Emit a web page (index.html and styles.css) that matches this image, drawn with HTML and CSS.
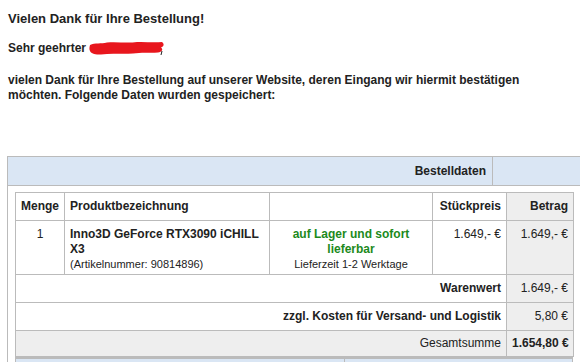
FILE: index.html
```html
<!DOCTYPE html>
<html lang="de">
<head>
<meta charset="utf-8">
<title>Bestellung</title>
<link rel="stylesheet" href="styles.css">
</head>
<body>
<div class="page">
  <p class="title">Vielen Dank für Ihre Bestellung!</p>
  <p class="greet">Sehr geehrter <svg class="redact" width="76" height="15" viewBox="0 0 76 15"><path d="M1 4 C6 1.5 12 3 18 1.5 C28 0.5 38 2.5 48 1 C56 0.5 64 2 73 1 C75.5 3 75 5.5 72 6.5 C74.5 8.5 73 11 69 11.5 C60 12 52 11 44 12.5 C34 13.5 22 12 12 13.5 C6 14 2 12.5 1 10 C0 8 0.5 6 1 4 Z" fill="#e8161d"/><path d="M73 10 L72 14" stroke="#222" stroke-width="1"/></svg></p>
  <p class="intro">vielen Dank für Ihre Bestellung auf unserer Website, deren Eingang wir hiermit bestätigen möchten. Folgende Daten wurden gespeichert:</p>

  <table class="outer">
    <colgroup><col class="oc1"><col class="oc2"></colgroup>
    <tr class="ohead">
      <th class="olabel">Bestelldaten</th>
      <th class="oblank"></th>
    </tr>
    <tr>
      <td class="obody" colspan="2">
        <table class="items">
          <colgroup>
            <col class="c-qty"><col class="c-name"><col class="c-stock"><col class="c-unit"><col class="c-sum">
          </colgroup>
          <tr class="head">
            <th class="qty">Menge</th>
            <th class="name">Produktbezeichnung</th>
            <th></th>
            <th class="num">Stückpreis</th>
            <th class="num grey">Betrag</th>
          </tr>
          <tr class="prod">
            <td class="qty">1</td>
            <td class="name"><strong>Inno3D GeForce RTX3090 iCHILL X3</strong><br><span class="small">(Artikelnummer: 90814896)</span></td>
            <td class="stock"><strong class="green">auf Lager und sofort lieferbar</strong><br><span class="small">Lieferzeit 1-2 Werktage</span></td>
            <td class="num">1.649,- €</td>
            <td class="num grey">1.649,- €</td>
          </tr>
          <tr class="tot">
            <th class="num" colspan="4">Warenwert</th>
            <td class="num grey">1.649,- €</td>
          </tr>
          <tr class="tot">
            <th class="num" colspan="4">zzgl. Kosten für Versand- und Logistik</th>
            <td class="num grey">5,80 €</td>
          </tr>
          <tr class="tot total">
            <td class="num" colspan="4">Gesamtsumme</td>
            <th class="num">1.654,80 €</th>
          </tr>
        </table>
        <table class="next">
          <colgroup><col class="n1"><col class="n2"></colgroup>
          <tr><th></th><th></th></tr>
        </table>
      </td>
    </tr>
  </table>
</div>
</body>
</html>
```
FILE: styles.css
```css
html, body {
  margin: 0;
  padding: 0;
  overflow: hidden;
  background: #fff;
}
.page {
  font-family: "Liberation Sans", Arial, sans-serif;
  font-size: 12px;
  line-height: 15px;
  color: #222;
  padding: 11px 0 0 8px;
  width: 620px;
}
.title {
  margin: 0;
  font-size: 13px;
  font-weight: bold;
}
.greet {
  margin: 15px 0 0;
  font-weight: bold;
  height: 15px;
}
.redact {
  vertical-align: -4px;
}
.intro {
  margin: 17px 0 0;
  font-weight: bold;
  width: 540px;
}
.outer {
  margin: 53px 0 0 -1px;
  border-collapse: collapse;
  table-layout: fixed;
  width: 640px;
}
.outer .oc1 { width: 485px; }
.outer td, .outer th { border: 1px solid #bbb; }
.ohead th {
  background: #dae6f4;
  height: 28px;
  padding: 0 6px;
  font-weight: bold;
  text-align: right;
}
.obody {
  padding: 6px 7px 0;
  vertical-align: top;
}
.items, .next {
  border-collapse: collapse;
  table-layout: fixed;
  width: 558px;
}
.items td, .items th {
  border: 1px solid #bbb;
  padding: 6px 5px 6px;
  vertical-align: top;
  text-align: left;
}
.c-qty { width: 49px; }
.c-name { width: 205px; }
.c-stock { width: 163px; }
.c-unit { width: 74px; }
.c-sum { width: 67px; }
.items .head th {
  font-weight: bold;
  vertical-align: middle;
  height: 15px;
}
.items .qty { text-align: center; }
.items .num { text-align: right; white-space: nowrap; }
.items .grey { background: #eee; }
.items .prod td { padding-bottom: 2px; }
.small {
  font-size: 11px;
  line-height: 13px;
}
.stock { text-align: center !important; }
.green { color: #1c8a1c; }
.tot th, .tot td {
  height: 15px;
  vertical-align: middle !important;
}
.tot th { font-weight: bold; }
.tot td { font-weight: normal; }
.items .total td, .items .total th {
  background: #eee;
  padding-top: 5px;
  padding-bottom: 5px;
}
.total th { font-weight: bold; }
.next { border-top: 2px solid #bbb; }
.next .n1 { width: 329px; }
.next th {
  border: 1px solid #bbb;
  border-top: 0;
  background: #dae6f4;
  height: 20px;
}
```
